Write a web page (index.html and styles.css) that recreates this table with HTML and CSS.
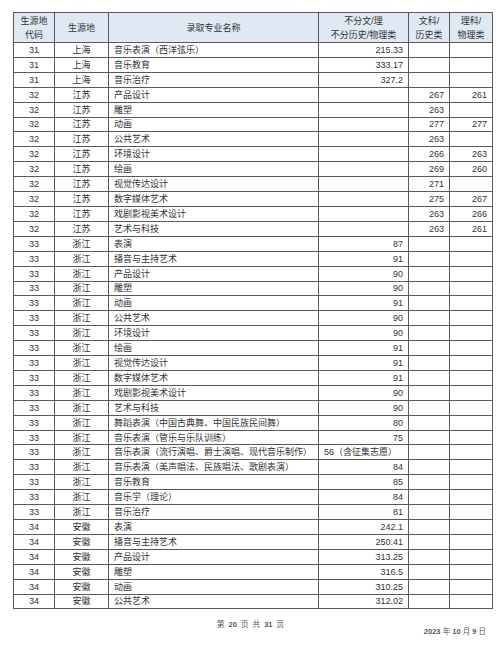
FILE: index.html
```html
<!DOCTYPE html>
<html lang="zh">
<head>
<meta charset="utf-8">
<link rel="stylesheet" href="styles.css">
</head>
<body>
<div class="page">
<table class="grid">
<colgroup>
<col class="c1"><col class="c2"><col class="c3"><col class="c4"><col class="c5"><col class="c6">
</colgroup>
<thead>
<tr class="head">
<th>生源地<br>代码</th><th>生源地</th><th>录取专业名称</th><th>不分文/理<br>不分历史/物理类</th><th>文科/<br>历史类</th><th>理科/<br>物理类</th>
</tr>
</thead>
<tbody>
<tr><td>31</td><td>上海</td><td class="l">音乐表演（西洋弦乐）</td><td class="r">215.33</td><td class="r"></td><td class="r"></td></tr>
<tr><td>31</td><td>上海</td><td class="l">音乐教育</td><td class="r">333.17</td><td class="r"></td><td class="r"></td></tr>
<tr><td>31</td><td>上海</td><td class="l">音乐治疗</td><td class="r">327.2</td><td class="r"></td><td class="r"></td></tr>
<tr><td>32</td><td>江苏</td><td class="l">产品设计</td><td class="r"></td><td class="r">267</td><td class="r">261</td></tr>
<tr><td>32</td><td>江苏</td><td class="l">雕塑</td><td class="r"></td><td class="r">263</td><td class="r"></td></tr>
<tr><td>32</td><td>江苏</td><td class="l">动画</td><td class="r"></td><td class="r">277</td><td class="r">277</td></tr>
<tr><td>32</td><td>江苏</td><td class="l">公共艺术</td><td class="r"></td><td class="r">263</td><td class="r"></td></tr>
<tr><td>32</td><td>江苏</td><td class="l">环境设计</td><td class="r"></td><td class="r">266</td><td class="r">263</td></tr>
<tr><td>32</td><td>江苏</td><td class="l">绘画</td><td class="r"></td><td class="r">269</td><td class="r">260</td></tr>
<tr><td>32</td><td>江苏</td><td class="l">视觉传达设计</td><td class="r"></td><td class="r">271</td><td class="r"></td></tr>
<tr><td>32</td><td>江苏</td><td class="l">数字媒体艺术</td><td class="r"></td><td class="r">275</td><td class="r">267</td></tr>
<tr><td>32</td><td>江苏</td><td class="l">戏剧影视美术设计</td><td class="r"></td><td class="r">263</td><td class="r">266</td></tr>
<tr><td>32</td><td>江苏</td><td class="l">艺术与科技</td><td class="r"></td><td class="r">263</td><td class="r">261</td></tr>
<tr><td>33</td><td>浙江</td><td class="l">表演</td><td class="r">87</td><td class="r"></td><td class="r"></td></tr>
<tr><td>33</td><td>浙江</td><td class="l">播音与主持艺术</td><td class="r">91</td><td class="r"></td><td class="r"></td></tr>
<tr><td>33</td><td>浙江</td><td class="l">产品设计</td><td class="r">90</td><td class="r"></td><td class="r"></td></tr>
<tr><td>33</td><td>浙江</td><td class="l">雕塑</td><td class="r">90</td><td class="r"></td><td class="r"></td></tr>
<tr><td>33</td><td>浙江</td><td class="l">动画</td><td class="r">91</td><td class="r"></td><td class="r"></td></tr>
<tr><td>33</td><td>浙江</td><td class="l">公共艺术</td><td class="r">90</td><td class="r"></td><td class="r"></td></tr>
<tr><td>33</td><td>浙江</td><td class="l">环境设计</td><td class="r">90</td><td class="r"></td><td class="r"></td></tr>
<tr><td>33</td><td>浙江</td><td class="l">绘画</td><td class="r">91</td><td class="r"></td><td class="r"></td></tr>
<tr><td>33</td><td>浙江</td><td class="l">视觉传达设计</td><td class="r">91</td><td class="r"></td><td class="r"></td></tr>
<tr><td>33</td><td>浙江</td><td class="l">数字媒体艺术</td><td class="r">91</td><td class="r"></td><td class="r"></td></tr>
<tr><td>33</td><td>浙江</td><td class="l">戏剧影视美术设计</td><td class="r">90</td><td class="r"></td><td class="r"></td></tr>
<tr><td>33</td><td>浙江</td><td class="l">艺术与科技</td><td class="r">90</td><td class="r"></td><td class="r"></td></tr>
<tr><td>33</td><td>浙江</td><td class="l">舞蹈表演（中国古典舞、中国民族民间舞）</td><td class="r">80</td><td class="r"></td><td class="r"></td></tr>
<tr><td>33</td><td>浙江</td><td class="l">音乐表演（管乐与乐队训练）</td><td class="r">75</td><td class="r"></td><td class="r"></td></tr>
<tr><td>33</td><td>浙江</td><td class="l">音乐表演（流行演唱、爵士演唱、现代音乐制作）</td><td class="l">56（含征集志愿）</td><td class="r"></td><td class="r"></td></tr>
<tr><td>33</td><td>浙江</td><td class="l">音乐表演（美声唱法、民族唱法、歌剧表演）</td><td class="r">84</td><td class="r"></td><td class="r"></td></tr>
<tr><td>33</td><td>浙江</td><td class="l">音乐教育</td><td class="r">85</td><td class="r"></td><td class="r"></td></tr>
<tr><td>33</td><td>浙江</td><td class="l">音乐学（理论）</td><td class="r">84</td><td class="r"></td><td class="r"></td></tr>
<tr><td>33</td><td>浙江</td><td class="l">音乐治疗</td><td class="r">81</td><td class="r"></td><td class="r"></td></tr>
<tr><td>34</td><td>安徽</td><td class="l">表演</td><td class="r">242.1</td><td class="r"></td><td class="r"></td></tr>
<tr><td>34</td><td>安徽</td><td class="l">播音与主持艺术</td><td class="r">250.41</td><td class="r"></td><td class="r"></td></tr>
<tr><td>34</td><td>安徽</td><td class="l">产品设计</td><td class="r">313.25</td><td class="r"></td><td class="r"></td></tr>
<tr><td>34</td><td>安徽</td><td class="l">雕塑</td><td class="r">316.5</td><td class="r"></td><td class="r"></td></tr>
<tr><td>34</td><td>安徽</td><td class="l">动画</td><td class="r">310.25</td><td class="r"></td><td class="r"></td></tr>
<tr><td>34</td><td>安徽</td><td class="l">公共艺术</td><td class="r">312.02</td><td class="r"></td><td class="r"></td></tr>
</tbody>
</table>
<div class="footer">
<div class="pageno">第 <b>20</b> 页 共 <b>31</b> 页</div>
<div class="date"><b>2023</b> 年 <b>10</b> 月 <b>9</b> 日</div>
</div>
</div>
</body>
</html>
```
FILE: styles.css
```css
html, body {
  margin: 0;
  padding: 0;
  background: #ffffff;
}
body {
  font-family: "Liberation Sans", "Noto Sans CJK SC", sans-serif;
  color: #333333;
  font-size: 9px;
}
.page {
  width: 500px;
  height: 660px;
  padding: 12px 0 0 13px;
  box-sizing: border-box;
}
.grid {
  border-collapse: collapse;
  table-layout: fixed;
  width: 479px;
}
.c1 { width: 41px; }
.c2 { width: 54px; }
.c3 { width: 210px; }
.c4 { width: 90px; }
.c5 { width: 41px; }
.c6 { width: 43px; }
.grid th, .grid td {
  border: 1px solid #5a5a5a;
  padding: 0;
  font-weight: normal;
  line-height: 12px;
  white-space: nowrap;
  overflow: hidden;
}
.grid th {
  background: #dfe8f3;
  height: 29px;
  text-align: center;
  vertical-align: middle;
  line-height: 14px;
}
.grid td {
  height: 13.92px;
  text-align: center;
  vertical-align: middle;
}
.grid td.l {
  text-align: left;
  padding-left: 5px;
}
.grid td.r {
  text-align: right;
  padding-right: 5px;
}
.footer {
  height: 40px;
  width: 479px;
  color: #555555;
  font-size: 7.5px;
  font-family: "Liberation Sans", "Noto Sans CJK SC", sans-serif;
}
.footer b {
  font-weight: bold;
}
.pageno {
  text-align: center;
  padding-top: 9px;
  margin-left: -4px;
  word-spacing: 2px;
}
.date {
  text-align: right;
  margin-top: -4px;
  padding-right: 6px;
}
```
